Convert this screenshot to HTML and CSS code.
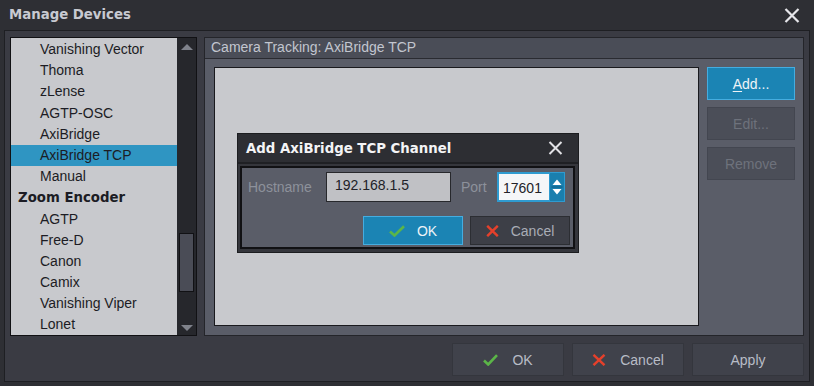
FILE: index.html
```html
<!DOCTYPE html>
<html>
<head>
<meta charset="utf-8">
<title>Manage Devices</title>
<link rel="stylesheet" href="styles.css">
</head>
<body>
<div class="window">
  <div class="titlebar">
    <span class="title">Manage Devices</span>
    <svg class="close" width="16" height="15" viewBox="0 0 16 15"><path d="M1.5 1 L14.5 14 M14.5 1 L1.5 14" stroke="#e6e6ea" stroke-width="2.2" fill="none"/></svg>
  </div>
  <div class="frame">
    <div class="content">
      <div class="listbox">
        <ul class="list">
          <li class="item">Vanishing Vector</li>
          <li class="item">Thoma</li>
          <li class="item">zLense</li>
          <li class="item">AGTP-OSC</li>
          <li class="item">AxiBridge</li>
          <li class="item selected">AxiBridge TCP</li>
          <li class="item">Manual</li>
          <li class="item heading">Zoom Encoder</li>
          <li class="item">AGTP</li>
          <li class="item">Free-D</li>
          <li class="item">Canon</li>
          <li class="item">Camix</li>
          <li class="item">Vanishing Viper</li>
          <li class="item">Lonet</li>
        </ul>
        <div class="scrollbar">
          <div class="sb-arrow"><svg width="12" height="6" viewBox="0 0 12 6"><path d="M0 6 L6 0 L12 6 Z" fill="#7f828b"/></svg></div>
          <div class="sb-track"><div class="sb-thumb"></div></div>
          <div class="sb-arrow down"><svg width="12" height="6" viewBox="0 0 12 6"><path d="M0 0 L6 6 L12 0 Z" fill="#7f828b"/></svg></div>
        </div>
      </div>
      <div class="group">
        <div class="group-header">Camera Tracking: AxiBridge TCP</div>
        <div class="group-body">
          <div class="channels"></div>
          <div class="side-buttons">
            <div class="btn primary"><span><u>A</u>dd...</span></div>
            <div class="btn disabled">Edit...</div>
            <div class="btn disabled">Remove</div>
          </div>
        </div>
      </div>
    </div>
    <div class="footer">
      <div class="btn footer-btn">
        <svg class="ico" width="15" height="12" viewBox="0 0 15 12"><path d="M1 6.5 L5.2 10.5 L14 1.2" stroke="#5bb548" stroke-width="2.6" fill="none"/></svg>
        <span>OK</span>
      </div>
      <div class="btn footer-btn">
        <svg class="ico" width="14" height="12" viewBox="0 0 14 12"><path d="M1.5 0.8 L12.5 11.2 M12.5 0.8 L1.5 11.2" stroke="#e5402b" stroke-width="2.4" fill="none"/></svg>
        <span>Cancel</span>
      </div>
      <div class="btn footer-btn">Apply</div>
    </div>
  </div>

  <div class="dialog">
    <div class="dlg-title">
      <span class="dlg-caption">Add AxiBridge TCP Channel</span>
      <svg width="15" height="14" viewBox="0 0 15 14"><path d="M1.5 1 L13.5 13 M13.5 1 L1.5 13" stroke="#e2e2e6" stroke-width="2" fill="none"/></svg>
    </div>
    <div class="dlg-body">
      <div class="dlg-panel">
        <div class="dlg-row">
          <span class="lbl host-lbl">Hostname</span>
          <div class="field host">192.168.1.5</div>
          <span class="lbl port-lbl">Port</span>
          <div class="field port">17601</div>
          <div class="spinner">
            <svg width="12" height="24" viewBox="0 0 12 24"><path d="M1.5 10 L6 4.5 L10.5 10 Z M1.5 14 L6 19.5 L10.5 14 Z" fill="#ffffff"/><path d="M0.5 12 H11.5" stroke="#0f5d82" stroke-width="1"/></svg>
          </div>
        </div>
        <div class="dlg-actions">
          <div class="btn primary dlg-btn">
            <svg class="ico" width="16" height="12" viewBox="0 0 16 12"><path d="M1 6.5 L5.5 10.5 L15 1.2" stroke="#5bb548" stroke-width="2.6" fill="none"/></svg>
            <span>OK</span>
          </div>
          <div class="btn dlg-btn cancel">
            <svg class="ico" width="13" height="12" viewBox="0 0 13 12"><path d="M1.2 0.8 L11.8 11.2 M11.8 0.8 L1.2 11.2" stroke="#e5402b" stroke-width="2.4" fill="none"/></svg>
            <span>Cancel</span>
          </div>
        </div>
      </div>
    </div>
  </div>
</div>
</body>
</html>
```

FILE: styles.css
```css
html, body {
  margin: 0;
  padding: 0;
}
body {
  width: 814px;
  height: 386px;
  background: #2e2f34;
  font-family: "Liberation Sans", Arial, sans-serif;
  font-size: 14px;
  overflow: hidden;
}
.window {
  position: relative;
  width: 814px;
  height: 386px;
}
.titlebar {
  height: 30px;
  display: flex;
  align-items: center;
  justify-content: space-between;
  padding: 0 14px 0 9px;
  box-sizing: border-box;
}
.title {
  font-family: "DejaVu Sans", sans-serif;
  font-weight: bold;
  font-size: 13.3px;
  color: #c8cad1;
  margin-top: -1px;
}
.close {
  display: block;
}
.frame {
  margin: 0 4px;
  height: 352px;
  box-sizing: border-box;
  border: 1px solid #1e1f23;
  background: #3a3b43;
  padding: 6px 5px 5px 5px;
  display: flex;
  flex-direction: column;
}
.content {
  display: flex;
  gap: 7px;
  height: 299px;
}
.listbox {
  width: 187px;
  height: 299px;
  box-sizing: border-box;
  border: 1px solid #111114;
  background: #c8c9cd;
  display: flex;
}
.list {
  list-style: none;
  margin: 0;
  padding: 1px 0 0 0;
  flex: 1;
}
.item {
  height: 21.2px;
  line-height: 21px;
  padding-left: 29px;
  color: #1c1c24;
  white-space: nowrap;
}
.item.selected {
  background: #2f95c2;
}
.item.heading {
  padding-left: 7px;
  font-family: "DejaVu Sans", sans-serif;
  font-weight: bold;
  font-size: 13.3px;
}
.scrollbar {
  width: 19px;
  background: #26272c;
  display: flex;
  flex-direction: column;
}
.sb-arrow {
  height: 19px;
  display: flex;
  justify-content: center;
  align-items: flex-start;
  padding-top: 6px;
  box-sizing: border-box;
}
.sb-arrow.down {
  align-items: flex-end;
  padding-top: 0;
  padding-bottom: 4px;
}
.sb-arrow svg {
  display: block;
}
.sb-track {
  flex: 1;
  padding: 0 2px;
}
.sb-thumb {
  margin-top: 176px;
  height: 59px;
  box-sizing: border-box;
  border: 1px solid #111114;
  background: #4a4c56;
}
.group {
  width: 600px;
  height: 299px;
  box-sizing: border-box;
  border: 1px solid #24252a;
  display: flex;
  flex-direction: column;
}
.group-header {
  height: 21px;
  box-sizing: border-box;
  border-bottom: 1px solid #2a2b31;
  background: #4a4d57;
  color: #c2c6cf;
  padding-left: 6px;
  line-height: 19px;
  white-space: nowrap;
}
.group-body {
  flex: 1;
  background: #5a5d68;
  padding: 8px 8px 9px 9px;
  display: flex;
  gap: 8px;
}
.channels {
  width: 485px;
  box-sizing: border-box;
  border: 1px solid #1a1a1e;
  background: #c8c9cd;
}
.side-buttons {
  width: 88px;
  display: flex;
  flex-direction: column;
  gap: 7px;
}
.btn {
  box-sizing: border-box;
  height: 33px;
  display: flex;
  align-items: center;
  justify-content: center;
  border: 1px solid #34363d;
  background: #40424b;
  color: #b8bcc6;
  white-space: nowrap;
}
.btn.primary {
  background: #1b84b4;
  border-color: #45ade0;
  color: #eef3f7;
}
.btn.disabled {
  background: #4b4e58;
  border-color: #434650;
  color: #6e727c;
}
.btn u {
  text-decoration: underline;
  text-underline-offset: 2px;
}
.footer {
  margin-top: 7px;
  display: flex;
  justify-content: flex-end;
  gap: 8px;
}
.footer-btn {
  width: 112px;
}
.ico {
  display: block;
  margin-right: 14px;
}
.dialog {
  position: absolute;
  left: 237px;
  top: 133px;
  width: 342px;
  height: 120px;
  box-sizing: border-box;
  background: #2d2e33;
  border: 1px solid #1c1d20;
  display: flex;
  flex-direction: column;
}
.dlg-title {
  height: 28px;
  display: flex;
  align-items: center;
  justify-content: space-between;
  padding: 0 15px 0 8px;
  flex: none;
}
.dlg-caption {
  font-family: "DejaVu Sans", sans-serif;
  font-weight: bold;
  font-size: 13.3px;
  color: #f4f4f6;
}
.dlg-title svg {
  display: block;
}
.dlg-body {
  flex: 1;
  border-top: 2px solid #1f2024;
  padding: 2px 3px 3px 2px;
  background: #35363c;
  display: flex;
}
.dlg-panel {
  flex: 1;
  box-sizing: border-box;
  border: 2px solid #111114;
  background: #5a5d68;
  padding: 4px 3px 2px 6px;
  display: flex;
  flex-direction: column;
  gap: 14px;
}
.dlg-row {
  display: flex;
  align-items: center;
  height: 30px;
}
.lbl {
  color: #8d919b;
}
.host-lbl {
  width: 78px;
}
.port-lbl {
  width: 36px;
  margin-left: 10px;
}
.field {
  box-sizing: border-box;
  height: 30px;
  border: 1px solid #27282c;
  background: #c0c1c5;
  color: #222228;
  padding: 4px 0 0 8px;
}
.field.host {
  width: 125px;
}
.field.port {
  width: 52px;
  background: #f5f6f8;
  border: 2px solid #2f9bd0;
  border-right: none;
  padding: 4px 0 0 4px;
  line-height: 20px;
}
.spinner {
  width: 16px;
  height: 30px;
  box-sizing: border-box;
  background: #1a7fae;
  border: 1px solid #2f9bd0;
  display: flex;
  align-items: center;
  justify-content: center;
}
.spinner svg {
  display: block;
}
.dlg-actions {
  display: flex;
  justify-content: flex-end;
  gap: 7px;
}
.dlg-btn {
  width: 100px;
  height: 29px;
}
.dlg-btn .ico {
  margin-right: 12px;
}
.dlg-btn.cancel {
  background: #3d3f47;
  border-color: #2c2e33;
  color: #a9adb6;
}
```
